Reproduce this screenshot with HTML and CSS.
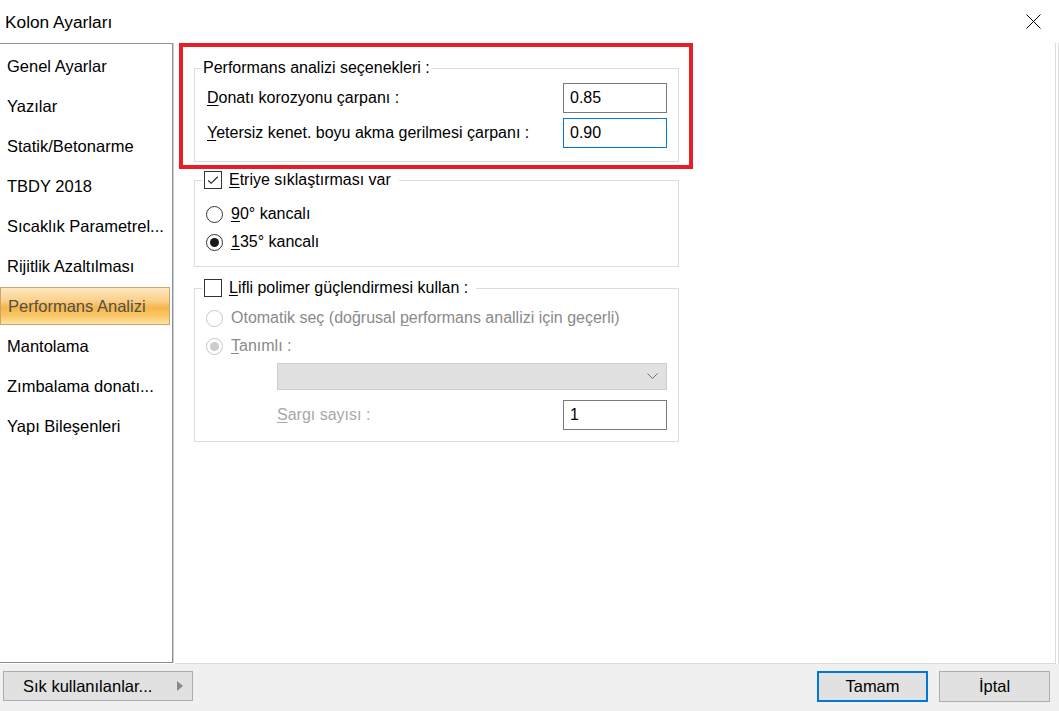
FILE: index.html
```html
<!DOCTYPE html>
<html lang="tr">
<head>
    <meta charset="UTF-8">
    <meta name="viewport" content="width=device-width, initial-scale=1.0">
    <title>Kolon Ayarları</title>
    <link rel="stylesheet" href="styles.css">
</head>
<body>
    <div class="dialog">
        <!-- başlık çubuğu -->
        <header class="title-bar">
            <span class="title">Kolon Ayarları</span>
            <svg class="close" width="15" height="15" viewBox="0 0 15 15">
                <path d="M0.5 0.5 L14.5 14.5 M14.5 0.5 L0.5 14.5" stroke="#000" stroke-width="1"/>
            </svg>
        </header>

        <div class="main">
            <!-- sol menü -->
            <ul class="side-list">
                <li>Genel Ayarlar</li>
                <li>Yazılar</li>
                <li>Statik/Betonarme</li>
                <li>TBDY 2018</li>
                <li>Sıcaklık Parametrel...</li>
                <li>Rijitlik Azaltılması</li>
                <li class="selected">Performans Analizi</li>
                <li>Mantolama</li>
                <li>Zımbalama donatı...</li>
                <li>Yapı Bileşenleri</li>
            </ul>

            <!-- ayar paneli -->
            <section class="panel">
                <div class="mark">
                    <fieldset class="group group-perf">
                        <legend>Performans analizi seçenekleri :</legend>
                        <div class="field-row">
                            <span><u>D</u>onatı korozyonu çarpanı :</span>
                            <div class="input">0.85</div>
                        </div>
                        <div class="field-row">
                            <span><u>Y</u>etersiz kenet. boyu akma gerilmesi çarpanı :</span>
                            <div class="input focused">0.90</div>
                        </div>
                    </fieldset>
                </div>

                <fieldset class="group group-etriye">
                    <legend class="check-legend">
                        <span class="checkbox checked">
                            <svg width="17" height="17" viewBox="0 0 17 17"><path d="M3.5 8.5 L6.5 11.5 L13.5 4.5" fill="none" stroke="#222" stroke-width="1.2"/></svg>
                        </span>
                        <span><u>E</u>triye sıklaştırması var</span>
                    </legend>
                    <div class="radio-row">
                        <span class="radio"></span>
                        <span><u>9</u>0° kancalı</span>
                    </div>
                    <div class="radio-row">
                        <span class="radio checked"></span>
                        <span><u>1</u>35° kancalı</span>
                    </div>
                </fieldset>

                <fieldset class="group group-frp">
                    <legend class="check-legend">
                        <span class="checkbox"></span>
                        <span><u>L</u>ifli polimer güçlendirmesi kullan :</span>
                    </legend>
                    <div class="radio-row disabled">
                        <span class="radio"></span>
                        <span>Otomatik seç (doğrusal <u>p</u>erformans anallizi için geçerli)</span>
                    </div>
                    <div class="radio-row disabled">
                        <span class="radio checked"></span>
                        <span><u>T</u>anımlı :</span>
                    </div>
                    <div class="select">
                        <svg width="11" height="7" viewBox="0 0 11 7"><path d="M0.5 0.5 L5.5 5.5 L10.5 0.5" fill="none" stroke="#6d6d6d" stroke-width="1"/></svg>
                    </div>
                    <div class="field-row sargi">
                        <span class="faint"><u>S</u>argı sayısı :</span>
                        <div class="input">1</div>
                    </div>
                </fieldset>
            </section>
        </div>

        <!-- alt butonlar -->
        <footer class="button-bar">
            <button class="btn btn-fav">
                <span>Sık kullanılanlar...</span>
                <svg width="6" height="10" viewBox="0 0 6 10"><path d="M0 0 L6 5 L0 10 Z" fill="#888"/></svg>
            </button>
            <div class="actions">
                <button class="btn btn-default">Tamam</button>
                <button class="btn">İptal</button>
            </div>
        </footer>
    </div>
</body>
</html>
```

FILE: styles.css
```css
* {
    box-sizing: border-box;
}

body {
    margin: 0;
    background: #f0f0f0;
    font-family: "Liberation Sans", Arial, sans-serif;
    font-size: 16.5px;
    color: #000;
}

.dialog {
    width: 1059px;
    height: 711px;
    overflow: hidden;
    display: flex;
    flex-direction: column;
}

/* başlık */
.title-bar {
    height: 43px;
    flex: none;
    background: #fff;
    display: flex;
    align-items: center;
    justify-content: space-between;
    padding: 0 18px 0 5px;
}

.title {
    font-size: 17.3px;
    margin-top: 1px;
}

.close {
    display: block;
}

/* gövde */
.main {
    height: 621px;
    flex: none;
    display: flex;
    align-items: flex-start;
    background: #fff;
    border-right: 1px solid #dcdcdc;
}

.side-list {
    list-style: none;
    margin: 0;
    padding: 2px 0 0;
    width: 173px;
    height: 620px;
    flex: none;
    border-top: 1px solid #8d9197;
    border-right: 1px solid #8d9197;
    border-bottom: 1px solid #8d9197;
    box-shadow: 1px 0 0 #cdd0d3;
}

.side-list li {
    height: 40px;
    line-height: 40px;
    padding-left: 7px;
    white-space: nowrap;
}

.side-list li.selected {
    height: 38px;
    line-height: 36px;
    margin: 1px 2px 1px 0;
    border: 1px solid #c5a774;
    color: #505050;
    background: linear-gradient(180deg, #fde7c0 0%, #fbd08a 35%, #f7b548 55%, #f9c768 78%, #fde3a4 100%);
}

.panel {
    flex: 1;
    height: 621px;
    margin: 0 2px;
    padding-left: 4px;
    font-size: 16px;
    border-right: 1px solid #dadada;
    border-bottom: 1px solid #dadada;
}

/* kırmızı çerçeve */
.mark {
    width: 514px;
    border: 4px solid #e81d25;
    padding: 11px 10px 3px 11px;
}

/* grup kutuları */
.group {
    width: 485px;
    margin: 0;
    border: 1px solid #dcdcdc;
    padding: 0 11px;
    min-inline-size: 0;
}

.group legend {
    height: 20px;
    line-height: 20px;
    padding: 0 2px;
}

.group-perf {
    padding: 5px 11px 13px 12px;
}

.group-perf legend {
    margin-left: -6px;
}

.group-etriye {
    margin: 1px 0 0 15px;
    padding-top: 10px;
    padding-bottom: 10px;
}

.group-frp {
    margin: 11px 0 0 15px;
    padding-top: 6px;
    padding-bottom: 11px;
}

.check-legend {
    display: flex;
    align-items: center;
    gap: 7px;
    margin-left: -4px;
    padding-right: 8px !important;
}

.field-row {
    display: flex;
    align-items: center;
    justify-content: space-between;
}

.field-row + .field-row {
    margin-top: 5px;
}

.input {
    width: 104px;
    height: 30px;
    border: 1px solid #7a7a7a;
    padding: 0 6px;
    line-height: 27px;
    background: #fff;
}

.input.focused {
    border-color: #0078d7;
}

u {
    text-decoration-thickness: 1px;
    text-underline-offset: 2px;
}

.checkbox {
    width: 18px;
    height: 18px;
    border: 1px solid #333;
    background: #fff;
    display: flex;
    align-items: center;
    justify-content: center;
}

.checkbox svg {
    display: block;
}

.radio-row {
    height: 28px;
    display: flex;
    align-items: center;
    gap: 8px;
}

.radio {
    width: 17px;
    height: 17px;
    border: 1px solid #333;
    border-radius: 50%;
    display: flex;
    align-items: center;
    justify-content: center;
    background: #fff;
}

.radio.checked::after {
    content: "";
    width: 9px;
    height: 9px;
    border-radius: 50%;
    background: #1a1a1a;
}

.radio-row.disabled {
    color: #8a8a8a;
}

.radio-row.disabled .radio {
    border-color: #c6c6c6;
}

.radio-row.disabled .radio.checked::after {
    background: #cccccc;
}

.select {
    margin: 3px 0 0 71px;
    height: 27px;
    background: #e1e1e1;
    border: 1px solid #cccccc;
    display: flex;
    align-items: center;
    justify-content: flex-end;
    padding-right: 8px;
}

.select svg {
    display: block;
}

.sargi {
    margin-top: 10px;
    padding-left: 71px;
}

.faint {
    color: #a8a8a8;
}

/* alt çubuk */
.button-bar {
    flex: 1;
    display: flex;
    justify-content: space-between;
    align-items: flex-start;
    padding: 7px 9px 0 3px;
}

.actions {
    display: flex;
    gap: 11px;
}

.btn {
    font: inherit;
    color: #000;
    height: 31px;
    width: 111px;
    background: #e1e1e1;
    border: 1px solid #adadad;
    padding: 0;
}

.btn-default {
    border: 2px solid #0078d7;
}

.btn-fav {
    width: 190px;
    height: 30px;
    display: flex;
    align-items: center;
    justify-content: space-between;
    padding: 0 9px 0 19px;
}
```
